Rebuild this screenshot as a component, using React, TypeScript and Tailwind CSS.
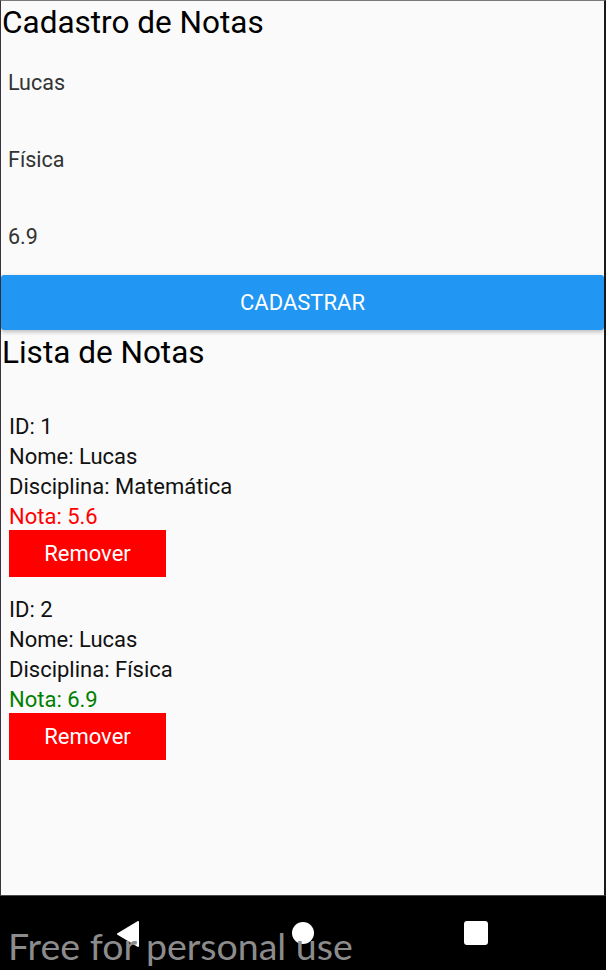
import React from 'react';

const notas = [
  { id: 1, nome: 'Lucas', disciplina: 'Matemática', nota: 5.6 },
  { id: 2, nome: 'Lucas', disciplina: 'Física', nota: 6.9 },
];

const App = () => {
  return (
    <div className="relative w-[606px] h-[970px] overflow-hidden bg-black font-['Roboto',sans-serif]">
      <div className="flex flex-col h-[896px] bg-[#fafafa] border-t border-t-[#7a7a7a] border-l border-l-[#3b3340] border-r-2 border-r-[#1a1a1a] border-b border-b-[#4a4a4a]">
        <h1 className="h-[43px] pl-px text-[31.5px] leading-[43px] text-black">Cadastro de Notas</h1>

        {['Lucas', 'Física', '6.9'].map((value, index) => (
          <div key={index} className="flex items-center h-[77px] pt-[2px] pl-[7px] text-[21.5px] text-[#333333]">
            {value}
          </div>
        ))}

        <button className="flex items-center justify-center h-[55px] rounded-[3px] bg-[#2196f3] text-white text-[22px] shadow-[0_2px_4px_rgba(0,0,0,0.25)]">
          CADASTRAR
        </button>

        <h2 className="h-[45px] pl-px text-[31.5px] leading-[45px] text-black">Lista de Notas</h2>

        <div className="flex flex-col gap-[18px] pt-[37px] pl-2">
          {notas.map((item) => (
            <div key={item.id} className="flex flex-col text-[22px] leading-[30px] text-[#111111]">
              <span>ID: {item.id}</span>
              <span>Nome: {item.nome}</span>
              <span>Disciplina: {item.disciplina}</span>
              <span className={item.nota < 6 ? 'text-[#ff0000]' : 'text-[#008000]'}>Nota: {item.nota}</span>
              <button className="flex items-center justify-center w-[157px] h-[47px] -mt-[2px] bg-[#ff0000] text-white text-[22px]">
                Remover
              </button>
            </div>
          ))}
        </div>
      </div>

      <div className="relative flex items-center h-[74px] bg-black">
        <svg className="absolute left-[116px] top-[25px]" width="24" height="26" viewBox="0 0 24 26">
          <path d="M22 1 L22 25 L2 13 Z" fill="#ffffff" stroke="#ffffff" strokeWidth="2" strokeLinejoin="round" />
        </svg>
        <div className="absolute left-[292px] top-[26px] w-[22px] h-[22px] rounded-full bg-white" />
        <div className="absolute left-[464px] top-[25px] w-[24px] h-[24px] rounded-[3px] bg-white" />
      </div>

      <div className="absolute left-[8px] top-[922px] text-[37.5px] leading-[48px] text-[#8c8c8c] font-['Lato',sans-serif] whitespace-nowrap">
        Free for personal use
      </div>
    </div>
  );
};

export default App;
